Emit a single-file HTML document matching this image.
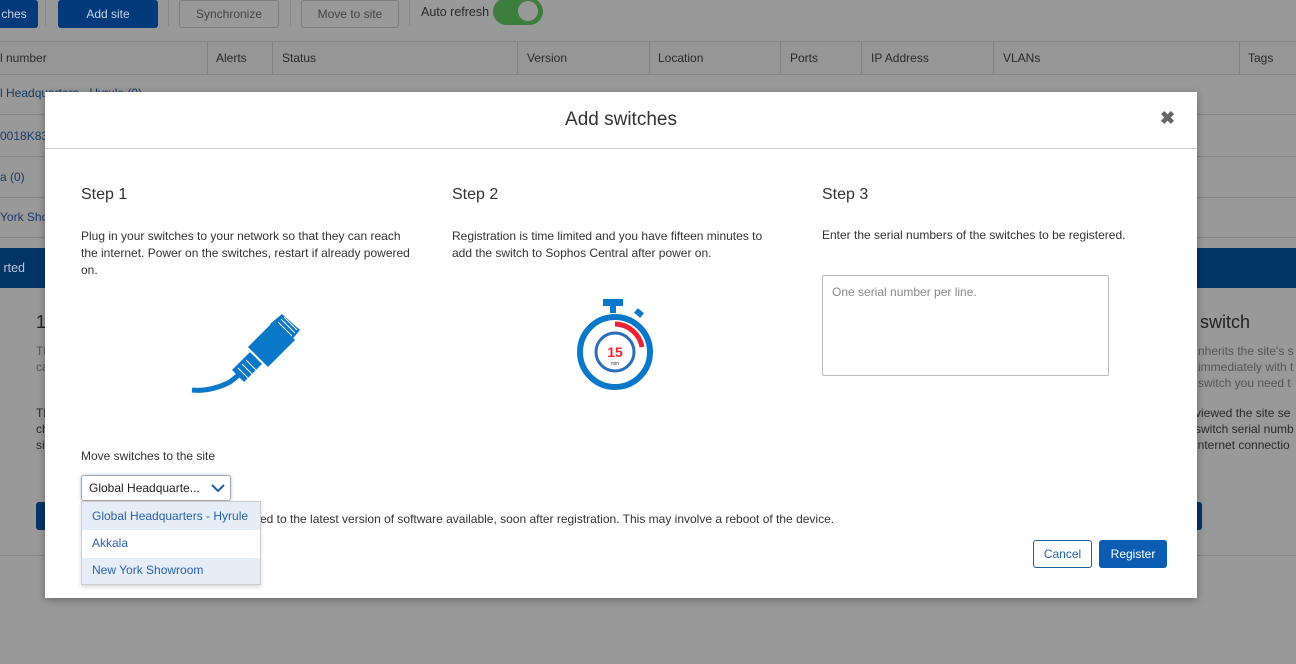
<!DOCTYPE html>
<html><head><meta charset="utf-8"><style>
*{box-sizing:border-box;margin:0;padding:0}
body{width:1296px;height:664px;overflow:hidden;background:#999;font-family:"Liberation Sans",sans-serif;font-size:12px;color:#222;position:relative}
.a{position:absolute;white-space:nowrap}
.bb{background:#033a7c;color:#c8d3e3;border-radius:3px;text-align:center;line-height:28px}
.gb{border:1px solid #7d7d7d;color:#444;border-radius:3px;text-align:center;line-height:26px}
.th{color:#2a2a2a}
.hl{position:absolute;height:1px;background:#838383;left:0;width:1296px}
.vl{position:absolute;width:1px;background:#838383;top:42px;height:32px}
.modal{position:absolute;left:45px;top:92px;width:1152px;height:506px;background:#fff;box-shadow:0 2px 8px rgba(0,0,0,.3)}
.m{color:#333}
</style></head><body>
<div class="a bb" style="left:-10px;top:0;width:48px;height:28px">ches</div>
<div class="a bb" style="left:58px;top:0;width:100px;height:28px">Add site</div>
<div class="a" style="top:0;width:1px;height:26px;background:#888;left:45px"></div>
<div class="a" style="left:168px;top:0;width:1px;height:26px;background:#888"></div>
<div class="a gb" style="left:179px;top:0;width:100px;height:28px">Synchronize</div>
<div class="a" style="left:290px;top:0;width:1px;height:26px;background:#888"></div>
<div class="a gb" style="left:301px;top:0;width:98px;height:28px">Move to site</div>
<div class="a" style="left:409px;top:0;width:1px;height:26px;background:#888"></div>
<div class="a" style="left:421px;top:5px;color:#2a2a2a;font-size:12.5px">Auto refresh</div>
<div class="a" style="left:493px;top:-2px;width:50px;height:27px;border-radius:14px;background:#3d7d3d"></div>
<div class="a" style="left:518px;top:1px;width:20px;height:20px;border-radius:50%;background:#999"></div>
<div class="hl" style="top:41px"></div><div class="hl" style="top:74px"></div>
<div class="a" style="left:0;top:42px;width:1296px;height:32px;background:#969696"></div>
<div class="a th" style="left:0;top:51px">l number</div>
<div class="vl" style="left:207px"></div><div class="a th" style="left:216px;top:51px">Alerts</div>
<div class="vl" style="left:272px"></div><div class="a th" style="left:282px;top:51px">Status</div>
<div class="vl" style="left:517px"></div><div class="a th" style="left:527px;top:51px">Version</div>
<div class="vl" style="left:649px"></div><div class="a th" style="left:658px;top:51px">Location</div>
<div class="vl" style="left:780px"></div><div class="a th" style="left:790px;top:51px">Ports</div>
<div class="vl" style="left:861px"></div><div class="a th" style="left:871px;top:51px">IP Address</div>
<div class="vl" style="left:993px"></div><div class="a th" style="left:1003px;top:51px">VLANs</div>
<div class="vl" style="left:1239px"></div><div class="a th" style="left:1248px;top:51px">Tags</div>
<div class="a" style="left:0;top:86px;color:#18396a">l Headquarters - Hyrule (0)</div>
<div class="hl" style="top:114px"></div>
<div class="a" style="left:0;top:129px;color:#18396a">0018K83</div>
<div class="hl" style="top:156px"></div>
<div class="a" style="left:0;top:170px;color:#18396a">a (0)</div>
<div class="hl" style="top:197px"></div>
<div class="a" style="left:0;top:210px;color:#18396a">York Showroom</div>
<div class="hl" style="top:237px"></div>
<div class="a" style="left:0;top:248px;width:1296px;height:40px;background:#033568;color:#b9c4d6;line-height:40px;font-size:12.5px">&nbsp;rted</div>
<div class="a" style="left:36px;top:312px;font-size:18px;color:#222">1</div>
<div class="a" style="left:1181px;top:312px;font-size:18px;color:#222">st switch</div>
<div class="a" style="left:1198px;top:343px;color:#555;line-height:16px">nherits the site's s<br>immediately with t<br>switch you need t</div>
<div class="a" style="left:1195px;top:405px;color:#2a2a2a;line-height:16px">viewed the site se<br>switch serial numb<br>internet connectio</div>
<div class="a" style="left:36px;top:343px;color:#555;line-height:16px">Th<br>ca</div>
<div class="a" style="left:36px;top:405px;color:#2a2a2a;line-height:16px">Th<br>ch<br>si</div>
<div class="a" style="left:36px;top:502px;width:20px;height:28px;background:#033568;border-radius:3px"></div>
<div class="a" style="left:1185px;top:502px;width:17px;height:28px;background:#033568;border-radius:3px"></div>
<div class="hl" style="top:555px"></div>

<div class="modal">
<div class="a m" style="left:0;width:1152px;top:17px;text-align:center;font-size:19px">Add switches</div>
<div class="a" style="left:1115px;top:16px;font-size:18px;color:#666;font-weight:bold">✖</div>
<div class="a" style="left:0;top:56px;width:1152px;height:1px;background:#ccc"></div>
<div class="a m" style="left:36px;top:94px;font-size:16px">Step 1</div>
<div class="a m" style="left:407px;top:94px;font-size:16px">Step 2</div>
<div class="a m" style="left:777px;top:94px;font-size:16px">Step 3</div>
<div class="a m" style="left:36px;top:136px;line-height:17px">Plug in your switches to your network so that they can reach<br>the internet. Power on the switches, restart if already powered<br>on.</div>
<div class="a m" style="left:407px;top:136px;line-height:17px">Registration is time limited and you have fifteen minutes to<br>add the switch to Sophos Central after power on.</div>
<div class="a m" style="left:777px;top:136px">Enter the serial numbers of the switches to be registered.</div>
<div class="a" style="left:777px;top:183px;width:287px;height:101px;border:1px solid #bbb;border-radius:2px;color:#888;padding:9px 9px">One serial number per line.</div>
<svg class="a" style="left:145px;top:220px" width="115" height="85" viewBox="0 0 115 85">
<path d="M2 78 Q20 80 40 70 L50 62" stroke="#0a78c8" stroke-width="5" fill="none"/>
<path d="M42 58 L60 40 L72 52 L54 70Z" fill="#0a78c8"/>
<path d="M58 35 L85 8 L105 28 L78 55Z" fill="#0a78c8"/>
<path d="M80 12 L92 2 L110 18 L100 30Z" fill="#0a78c8"/>
<g stroke="#fff" stroke-width="1"><path d="M88 10 L102 24 M91 7 L105 21 M94 5 L107 18"/><path d="M48 56 L58 66 M52 52 L62 62 M56 48 L66 58"/></g>
</svg>
<svg class="a" style="left:530px;top:205px" width="82" height="96" viewBox="0 0 82 96">
<rect x="28" y="2" width="20" height="7" fill="#0a78c8"/><rect x="35" y="8" width="6" height="8" fill="#0a78c8"/>
<rect x="60" y="13" width="8" height="6" fill="#0a78c8" transform="rotate(40 64 16)"/>
<circle cx="40" cy="55" r="35" fill="none" stroke="#0a78c8" stroke-width="6"/>
<path d="M40 27 A28 28 0 0 1 67 50" stroke="#e23" stroke-width="5" fill="none"/>
<circle cx="40" cy="55" r="19" fill="#fff" stroke="#2a6fb8" stroke-width="3"/>
<text x="40" y="60" text-anchor="middle" font-family="Liberation Sans" font-weight="bold" font-size="14" fill="#e23">15</text>
<text x="40" y="68" text-anchor="middle" font-family="Liberation Sans" font-size="5" fill="#444">min</text>
</svg>
<div class="a m" style="left:36px;top:357px">Move switches to the site</div>
<div class="a" style="left:36px;top:383px;width:150px;height:26px;border:1px solid #aaa;border-radius:3px;box-shadow:0 0 3px #9cc4ec;padding:5px 7px;color:#222">Global Headquarte...</div>
<svg class="a" style="left:166px;top:391px" width="14" height="10"><path d="M1 2 L7 8 L13 2" stroke="#1d5fa8" stroke-width="2" fill="none"/></svg>
<div class="a m" style="left:215px;top:420px">ed to the latest version of software available, soon after registration. This may involve a reboot of the device.</div>
<div class="a" style="left:36px;top:409px;width:180px;height:84px;border:1px solid #ccc;background:#fff;box-shadow:0 2px 4px rgba(0,0,0,.15)">
<div style="height:28px;background:#e6edf7;color:#2962ad;padding:7px 10px">Global Headquarters - Hyrule</div>
<div style="height:28px;color:#2962ad;padding:6px 10px">Akkala</div>
<div style="height:26px;background:#e6edf7;color:#2962ad;padding:5px 10px">New York Showroom</div>
</div>
<div class="a" style="left:988px;top:448px;width:59px;height:28px;border:1px solid #1d5fa8;border-radius:3px;color:#1d5fa8;text-align:center;line-height:26px">Cancel</div>
<div class="a" style="left:1054px;top:448px;width:68px;height:28px;background:#0b5cb3;border-radius:3px;color:#fff;text-align:center;line-height:28px">Register</div>
</div>
</body></html>
